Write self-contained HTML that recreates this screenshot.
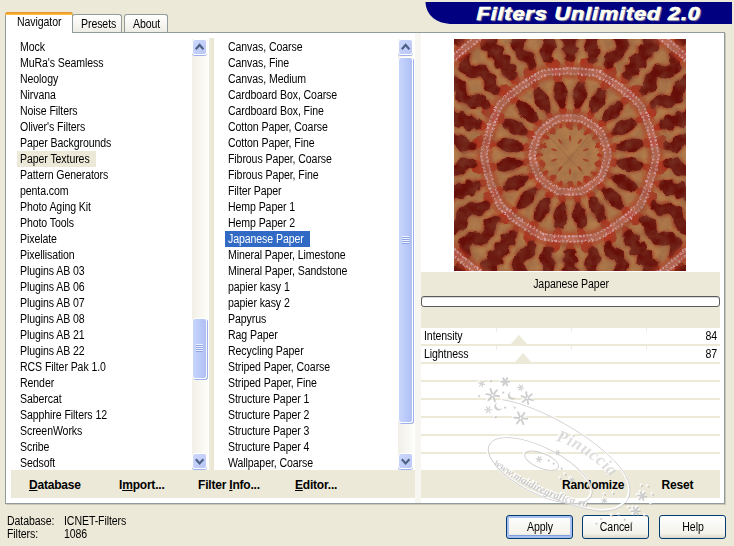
<!DOCTYPE html>
<html><head><meta charset="utf-8"><title>Filters Unlimited 2.0</title>
<style>
html,body{margin:0;padding:0}
body{width:734px;height:546px;background:#ece9d8;position:relative;overflow:hidden;font-family:"Liberation Sans",sans-serif;font-size:11px;color:#000}
div{position:absolute;box-sizing:border-box}
.x{font-size:12px;line-height:14px;white-space:nowrap;letter-spacing:-0.1px;transform:scaleX(.88)}
.sel1{background:#ece9d8}
.sel2{background:#316ac5;color:#fff}
.t{white-space:nowrap;letter-spacing:-0.32px;line-height:14px}
.b{white-space:nowrap;font-weight:bold;font-size:12px;line-height:14px;letter-spacing:-0.2px}
.b u{text-decoration:underline;text-underline-offset:1px}
.trk{width:16px;background:linear-gradient(90deg,#f1efe6,#fdfdfa)}
.sbtn{width:15px;height:16px;border:1px solid #fff;border-radius:3px;background:linear-gradient(135deg,#cdd8fc,#b9c6f6);box-shadow:0 1px 0 #9db0ee}
.sbtn svg{position:absolute;left:-1px;top:-1px}
.thumb{width:15px;border:1px solid #fff;border-radius:3px;background:linear-gradient(90deg,#c8d5fc,#b8c8f8 60%,#b0c0f4);box-shadow:1px 1px 0 #9db0ee}
.grip{width:7px;height:8px;background:repeating-linear-gradient(180deg,#eef3ff 0,#eef3ff 1px,#8ea4e6 1px,#8ea4e6 2px)}
.btn{height:24px;width:67px;border:1px solid #003c74;border-radius:3px;background:linear-gradient(180deg,#fff,#f3f2ea 80%,#dcd8c8);text-align:center;line-height:21px;letter-spacing:-0.2px;font-size:11px}
.sep{height:2px;left:421px;width:299px;background:#ece9d8}
</style></head><body>
<!-- banner -->
<svg style="position:absolute;left:0;top:0" width="734" height="32" viewBox="0 0 734 32">
<path d="M425.5,2 C426,15 436,24 453,24 L732,24 L732,2 Z" fill="#000080"/>
<g font-family="Liberation Sans, sans-serif" font-weight="bold" font-style="italic" font-size="19" transform="translate(476.5 19.6) scale(1.15 1)">
<text x="1" y="1" fill="#6a6a98" stroke="#6a6a98" stroke-width=".5" textLength="194.3" lengthAdjust="spacing">Filters Unlimited 2.0</text>
<text x="0" y="0" fill="#fffff4" stroke="#fffff4" stroke-width=".7" textLength="194.3" lengthAdjust="spacing">Filters Unlimited 2.0</text>
</g>
</svg>
<!-- tab pane -->
<div style="left:5px;top:32px;width:720px;height:472px;background:#fff;border:1px solid #919b9c;border-left-width:1px;box-shadow:1px 1px 0 #c9c7ba"></div>
<!-- tabs -->
<div style="left:72px;top:14px;width:50px;height:18px;border:1px solid #919b9c;border-bottom:none;border-radius:3px 3px 0 0;background:linear-gradient(180deg,#fff,#f4f3ee 70%,#ecebe4)"></div>
<div style="left:124px;top:14px;width:44px;height:18px;border:1px solid #919b9c;border-bottom:none;border-radius:3px 3px 0 0;background:linear-gradient(180deg,#fff,#f4f3ee 70%,#ecebe4)"></div>
<div style="left:5px;top:12px;width:68px;height:21px;border:1px solid #919b9c;border-bottom:none;border-radius:3px 3px 0 0;background:#fff"></div>
<div style="left:5px;top:12px;width:68px;height:3px;border-radius:3px 3px 0 0;background:linear-gradient(180deg,#e68b2c,#ffc73c)"></div>
<div class="x " style="top:15px;left:17px;transform-origin:0 50%;">Navigator</div>
<div class="x " style="top:17px;left:81px;transform-origin:0 50%;">Presets</div>
<div class="x " style="top:17px;left:133px;transform-origin:0 50%;">About</div>

<!-- lists -->
<div class="x " style="top:40px;left:19.6px;transform-origin:0 50%;">Mock</div>
<div class="x " style="top:56px;left:19.6px;transform-origin:0 50%;">MuRa's Seamless</div>
<div class="x " style="top:72px;left:19.6px;transform-origin:0 50%;">Neology</div>
<div class="x " style="top:88px;left:19.6px;transform-origin:0 50%;">Nirvana</div>
<div class="x " style="top:104px;left:19.6px;transform-origin:0 50%;">Noise Filters</div>
<div class="x " style="top:120px;left:19.6px;transform-origin:0 50%;">Oliver's Filters</div>
<div class="x " style="top:136px;left:19.6px;transform-origin:0 50%;">Paper Backgrounds</div>
<div class="sel1" style="left:17px;top:151px;width:79px;height:16px"></div>
<div class="x " style="top:152px;left:19.6px;transform-origin:0 50%;">Paper Textures</div>
<div class="x " style="top:168px;left:19.6px;transform-origin:0 50%;">Pattern Generators</div>
<div class="x " style="top:184px;left:19.6px;transform-origin:0 50%;">penta.com</div>
<div class="x " style="top:200px;left:19.6px;transform-origin:0 50%;">Photo Aging Kit</div>
<div class="x " style="top:216px;left:19.6px;transform-origin:0 50%;">Photo Tools</div>
<div class="x " style="top:232px;left:19.6px;transform-origin:0 50%;">Pixelate</div>
<div class="x " style="top:248px;left:19.6px;transform-origin:0 50%;">Pixellisation</div>
<div class="x " style="top:264px;left:19.6px;transform-origin:0 50%;">Plugins AB 03</div>
<div class="x " style="top:280px;left:19.6px;transform-origin:0 50%;">Plugins AB 06</div>
<div class="x " style="top:296px;left:19.6px;transform-origin:0 50%;">Plugins AB 07</div>
<div class="x " style="top:312px;left:19.6px;transform-origin:0 50%;">Plugins AB 08</div>
<div class="x " style="top:328px;left:19.6px;transform-origin:0 50%;">Plugins AB 21</div>
<div class="x " style="top:344px;left:19.6px;transform-origin:0 50%;">Plugins AB 22</div>
<div class="x " style="top:360px;left:19.6px;transform-origin:0 50%;">RCS Filter Pak 1.0</div>
<div class="x " style="top:376px;left:19.6px;transform-origin:0 50%;">Render</div>
<div class="x " style="top:392px;left:19.6px;transform-origin:0 50%;">Sabercat</div>
<div class="x " style="top:408px;left:19.6px;transform-origin:0 50%;">Sapphire Filters 12</div>
<div class="x " style="top:424px;left:19.6px;transform-origin:0 50%;">ScreenWorks</div>
<div class="x " style="top:440px;left:19.6px;transform-origin:0 50%;">Scribe</div>
<div class="x " style="top:456px;left:19.6px;transform-origin:0 50%;">Sedsoft</div>
<div class="x " style="top:40px;left:227.6px;transform-origin:0 50%;">Canvas, Coarse</div>
<div class="x " style="top:56px;left:227.6px;transform-origin:0 50%;">Canvas, Fine</div>
<div class="x " style="top:72px;left:227.6px;transform-origin:0 50%;">Canvas, Medium</div>
<div class="x " style="top:88px;left:227.6px;transform-origin:0 50%;">Cardboard Box, Coarse</div>
<div class="x " style="top:104px;left:227.6px;transform-origin:0 50%;">Cardboard Box, Fine</div>
<div class="x " style="top:120px;left:227.6px;transform-origin:0 50%;">Cotton Paper, Coarse</div>
<div class="x " style="top:136px;left:227.6px;transform-origin:0 50%;">Cotton Paper, Fine</div>
<div class="x " style="top:152px;left:227.6px;transform-origin:0 50%;">Fibrous Paper, Coarse</div>
<div class="x " style="top:168px;left:227.6px;transform-origin:0 50%;">Fibrous Paper, Fine</div>
<div class="x " style="top:184px;left:227.6px;transform-origin:0 50%;">Filter Paper</div>
<div class="x " style="top:200px;left:227.6px;transform-origin:0 50%;">Hemp Paper 1</div>
<div class="x " style="top:216px;left:227.6px;transform-origin:0 50%;">Hemp Paper 2</div>
<div class="sel2" style="left:225px;top:231px;width:85px;height:16px"></div>
<div class="x " style="top:232px;left:227.6px;transform-origin:0 50%;color:#fff;">Japanese Paper</div>
<div class="x " style="top:248px;left:227.6px;transform-origin:0 50%;">Mineral Paper, Limestone</div>
<div class="x " style="top:264px;left:227.6px;transform-origin:0 50%;">Mineral Paper, Sandstone</div>
<div class="x " style="top:280px;left:227.6px;transform-origin:0 50%;">papier kasy 1</div>
<div class="x " style="top:296px;left:227.6px;transform-origin:0 50%;">papier kasy 2</div>
<div class="x " style="top:312px;left:227.6px;transform-origin:0 50%;">Papyrus</div>
<div class="x " style="top:328px;left:227.6px;transform-origin:0 50%;">Rag Paper</div>
<div class="x " style="top:344px;left:227.6px;transform-origin:0 50%;">Recycling Paper</div>
<div class="x " style="top:360px;left:227.6px;transform-origin:0 50%;">Striped Paper, Coarse</div>
<div class="x " style="top:376px;left:227.6px;transform-origin:0 50%;">Striped Paper, Fine</div>
<div class="x " style="top:392px;left:227.6px;transform-origin:0 50%;">Structure Paper 1</div>
<div class="x " style="top:408px;left:227.6px;transform-origin:0 50%;">Structure Paper 2</div>
<div class="x " style="top:424px;left:227.6px;transform-origin:0 50%;">Structure Paper 3</div>
<div class="x " style="top:440px;left:227.6px;transform-origin:0 50%;">Structure Paper 4</div>
<div class="x " style="top:456px;left:227.6px;transform-origin:0 50%;">Wallpaper, Coarse</div>
<div class="trk" style="left:192px;top:39px;height:431px"></div><div class="sbtn" style="left:192px;top:39px"><svg width="16" height="17" viewBox="0 0 16 17"><path d="M3.8 10.2 L7.6 6 L11.4 10.2" fill="none" stroke="#4d6185" stroke-width="2.2"/></svg></div><div class="sbtn" style="left:192px;top:453px"><svg width="16" height="17" viewBox="0 0 16 17"><path d="M3.8 6.2 L7.6 10.4 L11.4 6.2" fill="none" stroke="#4d6185" stroke-width="2.2"/></svg></div><div class="thumb" style="left:192px;top:318px;height:61px"></div><div class="grip" style="left:196px;top:344px"></div>
<div class="trk" style="left:398px;top:39px;height:431px"></div><div class="sbtn" style="left:398px;top:39px"><svg width="16" height="17" viewBox="0 0 16 17"><path d="M3.8 10.2 L7.6 6 L11.4 10.2" fill="none" stroke="#4d6185" stroke-width="2.2"/></svg></div><div class="sbtn" style="left:398px;top:453px"><svg width="16" height="17" viewBox="0 0 16 17"><path d="M3.8 6.2 L7.6 10.4 L11.4 6.2" fill="none" stroke="#4d6185" stroke-width="2.2"/></svg></div><div class="thumb" style="left:398px;top:57px;height:366px"></div><div class="grip" style="left:402px;top:236px"></div>
<div style="left:209px;top:38px;width:5px;height:432px;background:linear-gradient(90deg,#efecdd,#e9e5d2)"></div>
<div style="left:415px;top:33px;width:6px;height:470px;background:#f7f6f1"></div>

<!-- bottom bars -->
<div style="left:11px;top:470px;width:404px;height:28px;background:#ece9d8"></div>
<div style="left:421px;top:470px;width:299px;height:28px;background:#ece9d8"></div>

<div class="b" style="left:29px;top:478px"><u>D</u>atabase</div>
<div class="b" style="left:119px;top:478px">I<u>m</u>port...</div>
<div class="b" style="left:198px;top:478px">Filter <u>I</u>nfo...</div>
<div class="b" style="left:295px;top:478px"><u>E</u>ditor...</div>
<div class="b" style="left:562px;top:478px">Randomize</div>
<div class="b" style="left:661.6px;top:478px">Reset</div>

<!-- preview -->
<svg style="position:absolute;left:454px;top:39px" width="232" height="232" viewBox="-116 -116 232 232">
<defs>
<filter id="kb0" x="-20%" y="-20%" width="140%" height="140%"><feGaussianBlur stdDeviation="0.35"/></filter>
<filter id="kb1" x="-20%" y="-20%" width="140%" height="140%"><feGaussianBlur stdDeviation="0.7"/></filter>
<filter id="kb2" x="-20%" y="-20%" width="140%" height="140%"><feGaussianBlur stdDeviation="1.6"/></filter>
<filter id="ktex" x="0" y="0" width="100%" height="100%"><feTurbulence type="fractalNoise" baseFrequency="0.09" numOctaves="3" seed="4"/><feColorMatrix values="0 0 0 0 0.25  0 0 0 0 0.1  0 0 0 0 0.05  0.9 0.9 0 0 -0.62"/></filter>
<filter id="kwarp2" x="-5%" y="-5%" width="110%" height="110%"><feTurbulence type="fractalNoise" baseFrequency="0.35" numOctaves="2" seed="5" result="n"/><feDisplacementMap in="SourceGraphic" in2="n" scale="3.2" xChannelSelector="R" yChannelSelector="G"/></filter>
<filter id="kwarp" x="-5%" y="-5%" width="110%" height="110%"><feTurbulence type="fractalNoise" baseFrequency="0.11" numOctaves="2" seed="9" result="n"/><feDisplacementMap in="SourceGraphic" in2="n" scale="5" xChannelSelector="R" yChannelSelector="G"/><feGaussianBlur stdDeviation="0.6"/></filter>
<path id="ksec" d="M-2.8,-94.0 L-5.8,-96.8 L-4.6,-99.9 L-7.4,-102.7 L-8.4,-105.7 L-5.5,-108.9 L-5.6,-111.9 L-8.8,-114.7 L-8.1,-117.7 L-5.2,-120.9 L-7.1,-123.8 L-9.8,-126.6 L-7.3,-129.8 L-5.5,-132.9 L-8.8,-135.7 L-10.0,-138.6 L-6.5,-141.9 L-3.6,-145.0 L3.6,-145.0 L6.5,-141.9 L10.0,-138.6 L8.8,-135.7 L5.5,-132.9 L7.3,-129.8 L9.8,-126.6 L7.1,-123.8 L5.2,-120.9 L8.1,-117.7 L8.8,-114.7 L5.6,-111.9 L5.5,-108.9 L8.4,-105.7 L7.4,-102.7 L4.6,-99.9 L5.8,-96.8 L2.8,-94.0Z M18.1,-92.2 L17.2,-95.5 L18.7,-98.2 L18.0,-101.4 L15.7,-104.8 L14.2,-108.1 L14.5,-111.1 L15.8,-113.9 L16.2,-116.9 L15.6,-120.0 L16.0,-123.0 L19.0,-125.6 L23.8,-127.8 L27.4,-130.1 L27.3,-133.2 L23.8,-136.9 L19.8,-140.6 L22.1,-143.3 L32.1,-141.4 L39.7,-136.3 L40.3,-133.0 L39.0,-130.3 L37.7,-127.5 L37.3,-124.5 L36.4,-121.7 L33.5,-119.4 L29.2,-117.4 L25.9,-115.1 L25.8,-112.1 L28.1,-108.4 L30.3,-104.7 L30.3,-101.6 L28.6,-99.0 L26.9,-96.3 L26.4,-93.3 L22.6,-91.2Z M-22.6,-91.2 L-26.4,-93.3 L-26.9,-96.3 L-28.6,-99.0 L-30.3,-101.6 L-30.3,-104.7 L-28.1,-108.4 L-25.8,-112.1 L-25.9,-115.1 L-29.2,-117.4 L-33.5,-119.4 L-36.4,-121.7 L-37.3,-124.5 L-37.7,-127.5 L-39.0,-130.3 L-40.3,-133.0 L-39.7,-136.3 L-32.1,-141.4 L-22.1,-143.3 L-19.8,-140.6 L-23.8,-136.9 L-27.3,-133.2 L-27.4,-130.1 L-23.8,-127.8 L-19.0,-125.6 L-16.0,-123.0 L-15.6,-120.0 L-16.2,-116.9 L-15.8,-113.9 L-14.5,-111.1 L-14.2,-108.1 L-15.7,-104.8 L-18.0,-101.4 L-18.7,-98.2 L-17.2,-95.5 L-18.1,-92.2Z M-2.5,-154.0 L-6.4,-156.9 L-6.1,-159.9 L-6.2,-162.9 L-7.0,-165.9 L-7.5,-168.8 L-6.8,-171.9 L-2.3,-175.0 L2.3,-175.0 L6.8,-171.9 L7.5,-168.8 L7.0,-165.9 L6.2,-162.9 L6.1,-159.9 L6.4,-156.9 L2.5,-154.0Z M19.0,-152.8 L15.5,-156.2 L16.2,-159.2 L16.6,-162.2 L16.2,-165.2 L16.0,-168.2 L17.2,-171.1 L22.1,-173.6 L26.6,-173.0 L30.6,-169.2 L31.0,-166.1 L30.0,-163.3 L28.8,-160.4 L28.3,-157.5 L28.2,-154.4 L23.9,-152.1Z M-23.9,-152.1 L-28.2,-154.4 L-28.3,-157.5 L-28.8,-160.4 L-30.0,-163.3 L-31.0,-166.1 L-30.6,-169.2 L-26.6,-173.0 L-22.1,-173.6 L-17.2,-171.1 L-16.0,-168.2 L-16.2,-165.2 L-16.6,-162.2 L-16.2,-159.2 L-15.5,-156.2 L-19.0,-152.8Z M40.0,-148.7 L37.1,-152.6 L38.2,-155.4 L39.0,-158.3 L39.0,-161.4 L39.3,-164.4 L40.9,-167.1 L46.1,-168.8 L50.4,-167.6 L53.9,-163.3 L53.8,-160.2 L52.4,-157.5 L50.8,-154.9 L49.9,-152.0 L49.4,-149.0 L44.8,-147.3Z M-44.8,-147.3 L-49.4,-149.0 L-49.9,-152.0 L-50.8,-154.9 L-52.4,-157.5 L-53.8,-160.2 L-53.9,-163.3 L-50.4,-167.6 L-46.1,-168.8 L-40.9,-167.1 L-39.3,-164.4 L-39.0,-161.4 L-39.0,-158.3 L-38.2,-155.4 L-37.1,-152.6 L-40.0,-148.7Z M6.2,-46.6 L4.3,-49.8 L3.7,-52.9 L3.1,-55.9 L2.7,-58.9 L2.9,-61.9 L3.8,-64.9 L5.2,-67.8 L6.6,-70.7 L8.6,-73.5 L14.5,-72.6 L15.6,-69.3 L16.0,-66.1 L16.4,-62.9 L16.4,-59.8 L15.6,-56.9 L14.4,-54.1 L12.8,-51.4 L11.3,-48.7 L8.5,-46.2Z M-8.5,-46.2 L-11.3,-48.7 L-12.8,-51.4 L-14.4,-54.1 L-15.6,-56.9 L-16.4,-59.8 L-16.4,-62.9 L-16.0,-66.1 L-15.6,-69.3 L-14.5,-72.6 L-8.6,-73.5 L-6.6,-70.7 L-5.2,-67.8 L-3.8,-64.9 L-2.9,-61.9 L-2.7,-58.9 L-3.1,-55.9 L-3.7,-52.9 L-4.3,-49.8 L-6.2,-46.6Z"/>
<path id="kacc" d="M5.0,-39.7 L3.1,-42.9 L3.1,-45.9 L5.3,-48.7 L10.0,-48.0 L11.2,-44.6 L10.3,-41.8 L7.5,-39.3Z M10.0,-73.3 L7.8,-76.6 L8.1,-79.6 L8.5,-82.6 L9.0,-85.5 L9.5,-88.5 L9.9,-91.5 L10.6,-94.4 L13.8,-97.0 L16.9,-96.5 L19.1,-93.1 L18.8,-90.1 L18.3,-87.1 L17.9,-84.1 L17.4,-81.2 L16.9,-78.2 L16.2,-75.3 L13.1,-72.8Z M-7.5,-39.3 L-10.3,-41.8 L-11.2,-44.6 L-10.0,-48.0 L-5.3,-48.7 L-3.1,-45.9 L-3.1,-42.9 L-5.0,-39.7Z M-13.1,-72.8 L-16.2,-75.3 L-16.9,-78.2 L-17.4,-81.2 L-17.9,-84.1 L-18.3,-87.1 L-18.8,-90.1 L-19.1,-93.1 L-16.9,-96.5 L-13.8,-97.0 L-10.6,-94.4 L-9.9,-91.5 L-9.5,-88.5 L-9.0,-85.5 L-8.5,-82.6 L-8.1,-79.6 L-7.8,-76.6 L-10.0,-73.3Z M-1.4,-88.0 L-4.0,-90.9 L-4.5,-93.9 L-4.5,-96.9 L-1.7,-100.0 L1.7,-100.0 L4.5,-96.9 L4.5,-93.9 L4.0,-90.9 L1.4,-88.0Z M-1.7,-141.0 L-4.7,-143.9 L-5.0,-146.9 L-5.0,-149.9 L-5.0,-152.9 L-3.7,-156.0 L3.7,-156.0 L5.0,-152.9 L5.0,-149.9 L5.0,-146.9 L4.7,-143.9 L1.7,-141.0Z M16.9,-86.4 L15.0,-89.8 L15.1,-92.8 L15.7,-95.7 L19.1,-98.2 L22.5,-97.4 L24.6,-93.8 L23.9,-90.9 L22.8,-88.1 L19.7,-85.8Z M27.6,-138.3 L25.3,-141.8 L25.7,-144.7 L26.3,-147.7 L26.9,-150.6 L28.8,-153.3 L36.1,-151.8 L36.7,-148.5 L36.1,-145.6 L35.4,-142.7 L34.6,-139.8 L31.0,-137.5Z M-19.7,-85.8 L-22.8,-88.1 L-23.9,-90.9 L-24.6,-93.8 L-22.5,-97.4 L-19.1,-98.2 L-15.7,-95.7 L-15.1,-92.8 L-15.0,-89.8 L-16.9,-86.4Z M-31.0,-137.5 L-34.6,-139.8 L-35.4,-142.7 L-36.1,-145.6 L-36.7,-148.5 L-36.1,-151.8 L-28.8,-153.3 L-26.9,-150.6 L-26.3,-147.7 L-25.7,-144.7 L-25.3,-141.8 L-27.6,-138.3Z M-1.0,-26.0 L-3.2,-28.8 L-2.8,-31.9 L2.8,-31.9 L3.2,-28.8 L1.0,-26.0Z M7.7,-25.9 L7.1,-29.2 L8.7,-31.8 L11.7,-30.9 L11.4,-27.7 L9.0,-25.5Z"/>
<path id="kmark" d="M-0.4,-13.5 L-1.2,-16.5 L-0.8,-19.5 L0.8,-19.5 L1.2,-16.5 L0.4,-13.5Z"/>
</defs>
<rect x="-116" y="-116" width="232" height="232" fill="#b27d4c"/>
<g fill="#a82a18" fill-opacity=".85" filter="url(#kwarp)"><use href="#kacc" transform="rotate(0)"/><use href="#kacc" transform="rotate(36)"/><use href="#kacc" transform="rotate(72)"/><use href="#kacc" transform="rotate(108)"/><use href="#kacc" transform="rotate(144)"/><use href="#kacc" transform="rotate(180)"/><use href="#kacc" transform="rotate(216)"/><use href="#kacc" transform="rotate(252)"/><use href="#kacc" transform="rotate(288)"/><use href="#kacc" transform="rotate(324)"/></g>
<g fill="#b5331f" stroke="#b5331f" stroke-width="3.5" opacity=".45" filter="url(#kb2)"><use href="#ksec" transform="rotate(0)"/><use href="#ksec" transform="rotate(36)"/><use href="#ksec" transform="rotate(72)"/><use href="#ksec" transform="rotate(108)"/><use href="#ksec" transform="rotate(144)"/><use href="#ksec" transform="rotate(180)"/><use href="#ksec" transform="rotate(216)"/><use href="#ksec" transform="rotate(252)"/><use href="#ksec" transform="rotate(288)"/><use href="#ksec" transform="rotate(324)"/></g>
<g fill="#6c1210" filter="url(#kwarp)"><use href="#ksec" transform="rotate(0)"/><use href="#ksec" transform="rotate(36)"/><use href="#ksec" transform="rotate(72)"/><use href="#ksec" transform="rotate(108)"/><use href="#ksec" transform="rotate(144)"/><use href="#ksec" transform="rotate(180)"/><use href="#ksec" transform="rotate(216)"/><use href="#ksec" transform="rotate(252)"/><use href="#ksec" transform="rotate(288)"/><use href="#ksec" transform="rotate(324)"/></g>
<g fill="#5c0d0c" fill-opacity=".35" filter="url(#kb2)"><use href="#ksec" transform="rotate(0)"/><use href="#ksec" transform="rotate(36)"/><use href="#ksec" transform="rotate(72)"/><use href="#ksec" transform="rotate(108)"/><use href="#ksec" transform="rotate(144)"/><use href="#ksec" transform="rotate(180)"/><use href="#ksec" transform="rotate(216)"/><use href="#ksec" transform="rotate(252)"/><use href="#ksec" transform="rotate(288)"/><use href="#ksec" transform="rotate(324)"/></g>
<g filter="url(#kwarp2)"><path d="M0.0,-37.0 L1.9,-37.0 L3.9,-36.9 L5.8,-36.8 L7.8,-36.6 L9.7,-36.4 L11.7,-36.1 L13.5,-35.2 L15.2,-34.2 L16.9,-33.2 L18.6,-32.1 L20.2,-31.1 L21.7,-29.9 L23.3,-28.8 L24.8,-27.6 L26.3,-26.3 L27.8,-25.0 L29.3,-23.7 L30.7,-22.3 L31.6,-20.5 L32.4,-18.7 L33.2,-16.9 L33.9,-15.1 L34.6,-13.3 L35.2,-11.4 L35.8,-9.6 L36.3,-7.7 L36.8,-5.8 L37.2,-3.9 L37.6,-2.0 L38.0,-0.0 L37.6,2.0 L37.2,3.9 L36.8,5.8 L36.3,7.7 L35.8,9.6 L35.2,11.4 L34.6,13.3 L33.9,15.1 L33.2,16.9 L32.4,18.7 L31.6,20.5 L30.7,22.3 L29.3,23.7 L27.8,25.0 L26.3,26.3 L24.8,27.6 L23.3,28.8 L21.7,29.9 L20.2,31.1 L18.6,32.1 L16.9,33.2 L15.2,34.2 L13.5,35.2 L11.7,36.1 L9.7,36.4 L7.8,36.6 L5.8,36.8 L3.9,36.9 L1.9,37.0 L0.0,37.0 L-1.9,37.0 L-3.9,36.9 L-5.8,36.8 L-7.8,36.6 L-9.7,36.4 L-11.7,36.1 L-13.5,35.2 L-15.2,34.2 L-16.9,33.2 L-18.6,32.1 L-20.2,31.1 L-21.7,29.9 L-23.3,28.8 L-24.8,27.6 L-26.3,26.3 L-27.8,25.0 L-29.3,23.7 L-30.7,22.3 L-31.6,20.5 L-32.4,18.7 L-33.2,16.9 L-33.9,15.1 L-34.6,13.3 L-35.2,11.4 L-35.8,9.6 L-36.3,7.7 L-36.8,5.8 L-37.2,3.9 L-37.6,2.0 L-38.0,0.0 L-37.6,-2.0 L-37.2,-3.9 L-36.8,-5.8 L-36.3,-7.7 L-35.8,-9.6 L-35.2,-11.4 L-34.6,-13.3 L-33.9,-15.1 L-33.2,-16.9 L-32.4,-18.7 L-31.6,-20.5 L-30.7,-22.3 L-29.3,-23.7 L-27.8,-25.0 L-26.3,-26.3 L-24.8,-27.6 L-23.3,-28.8 L-21.7,-29.9 L-20.2,-31.1 L-18.6,-32.1 L-16.9,-33.2 L-15.2,-34.2 L-13.5,-35.2 L-11.7,-36.1 L-9.7,-36.4 L-7.8,-36.6 L-5.8,-36.8 L-3.9,-36.9 L-1.9,-37.0Z" fill="none" stroke="#b23621" stroke-width="16" stroke-opacity=".6" filter="url(#kb2)"/><path d="M0.0,-37.0 L1.9,-37.0 L3.9,-36.9 L5.8,-36.8 L7.8,-36.6 L9.7,-36.4 L11.7,-36.1 L13.5,-35.2 L15.2,-34.2 L16.9,-33.2 L18.6,-32.1 L20.2,-31.1 L21.7,-29.9 L23.3,-28.8 L24.8,-27.6 L26.3,-26.3 L27.8,-25.0 L29.3,-23.7 L30.7,-22.3 L31.6,-20.5 L32.4,-18.7 L33.2,-16.9 L33.9,-15.1 L34.6,-13.3 L35.2,-11.4 L35.8,-9.6 L36.3,-7.7 L36.8,-5.8 L37.2,-3.9 L37.6,-2.0 L38.0,-0.0 L37.6,2.0 L37.2,3.9 L36.8,5.8 L36.3,7.7 L35.8,9.6 L35.2,11.4 L34.6,13.3 L33.9,15.1 L33.2,16.9 L32.4,18.7 L31.6,20.5 L30.7,22.3 L29.3,23.7 L27.8,25.0 L26.3,26.3 L24.8,27.6 L23.3,28.8 L21.7,29.9 L20.2,31.1 L18.6,32.1 L16.9,33.2 L15.2,34.2 L13.5,35.2 L11.7,36.1 L9.7,36.4 L7.8,36.6 L5.8,36.8 L3.9,36.9 L1.9,37.0 L0.0,37.0 L-1.9,37.0 L-3.9,36.9 L-5.8,36.8 L-7.8,36.6 L-9.7,36.4 L-11.7,36.1 L-13.5,35.2 L-15.2,34.2 L-16.9,33.2 L-18.6,32.1 L-20.2,31.1 L-21.7,29.9 L-23.3,28.8 L-24.8,27.6 L-26.3,26.3 L-27.8,25.0 L-29.3,23.7 L-30.7,22.3 L-31.6,20.5 L-32.4,18.7 L-33.2,16.9 L-33.9,15.1 L-34.6,13.3 L-35.2,11.4 L-35.8,9.6 L-36.3,7.7 L-36.8,5.8 L-37.2,3.9 L-37.6,2.0 L-38.0,0.0 L-37.6,-2.0 L-37.2,-3.9 L-36.8,-5.8 L-36.3,-7.7 L-35.8,-9.6 L-35.2,-11.4 L-34.6,-13.3 L-33.9,-15.1 L-33.2,-16.9 L-32.4,-18.7 L-31.6,-20.5 L-30.7,-22.3 L-29.3,-23.7 L-27.8,-25.0 L-26.3,-26.3 L-24.8,-27.6 L-23.3,-28.8 L-21.7,-29.9 L-20.2,-31.1 L-18.6,-32.1 L-16.9,-33.2 L-15.2,-34.2 L-13.5,-35.2 L-11.7,-36.1 L-9.7,-36.4 L-7.8,-36.6 L-5.8,-36.8 L-3.9,-36.9 L-1.9,-37.0Z" fill="none" stroke="#cf9294" stroke-width="7.5" stroke-opacity=".35" filter="url(#kb1)"/><path d="M0.0,-39.6 L2.1,-39.6 L4.2,-39.5 L6.2,-39.4 L8.3,-39.2 L10.4,-38.9 L12.6,-38.6 L14.4,-37.6 L16.3,-36.6 L18.1,-35.5 L19.9,-34.4 L21.6,-33.2 L23.3,-32.0 L24.9,-30.8 L26.6,-29.5 L28.2,-28.2 L29.8,-26.8 L31.3,-25.4 L32.9,-23.9 L33.8,-21.9 L34.7,-20.0 L35.5,-18.1 L36.3,-16.2 L37.0,-14.2 L37.7,-12.2 L38.3,-10.3 L38.8,-8.3 L39.4,-6.2 L39.8,-4.2 L40.2,-2.1 L40.6,-0.0 L40.2,2.1 L39.8,4.2 L39.4,6.2 L38.8,8.3 L38.3,10.3 L37.7,12.2 L37.0,14.2 L36.3,16.2 L35.5,18.1 L34.7,20.0 L33.8,21.9 L32.9,23.9 L31.3,25.4 L29.8,26.8 L28.2,28.2 L26.6,29.5 L24.9,30.8 L23.3,32.0 L21.6,33.2 L19.9,34.4 L18.1,35.5 L16.3,36.6 L14.4,37.6 L12.6,38.6 L10.4,38.9 L8.3,39.2 L6.2,39.4 L4.2,39.5 L2.1,39.6 L0.0,39.6 L-2.1,39.6 L-4.2,39.5 L-6.2,39.4 L-8.3,39.2 L-10.4,38.9 L-12.6,38.6 L-14.4,37.6 L-16.3,36.6 L-18.1,35.5 L-19.9,34.4 L-21.6,33.2 L-23.3,32.0 L-24.9,30.8 L-26.6,29.5 L-28.2,28.2 L-29.8,26.8 L-31.3,25.4 L-32.9,23.9 L-33.8,21.9 L-34.7,20.0 L-35.5,18.1 L-36.3,16.2 L-37.0,14.2 L-37.7,12.2 L-38.3,10.3 L-38.8,8.3 L-39.4,6.2 L-39.8,4.2 L-40.2,2.1 L-40.6,0.0 L-40.2,-2.1 L-39.8,-4.2 L-39.4,-6.2 L-38.8,-8.3 L-38.3,-10.3 L-37.7,-12.2 L-37.0,-14.2 L-36.3,-16.2 L-35.5,-18.1 L-34.7,-20.0 L-33.8,-21.9 L-32.9,-23.9 L-31.3,-25.4 L-29.8,-26.8 L-28.2,-28.2 L-26.6,-29.5 L-24.9,-30.8 L-23.3,-32.0 L-21.6,-33.2 L-19.9,-34.4 L-18.1,-35.5 L-16.3,-36.6 L-14.4,-37.6 L-12.6,-38.6 L-10.4,-38.9 L-8.3,-39.2 L-6.2,-39.4 L-4.2,-39.5 L-2.1,-39.6Z" fill="none" stroke="#d9a7ab" stroke-width="2.2" stroke-dasharray="2 1.7" stroke-opacity=".92" filter="url(#kb0)"/><path d="M0.0,-34.4 L1.8,-34.4 L3.6,-34.3 L5.4,-34.2 L7.2,-34.0 L9.1,-33.8 L10.9,-33.6 L12.5,-32.7 L14.1,-31.8 L15.7,-30.8 L17.2,-29.9 L18.7,-28.9 L20.2,-27.8 L21.7,-26.8 L23.1,-25.6 L24.5,-24.5 L25.8,-23.3 L27.2,-22.0 L28.5,-20.7 L29.4,-19.1 L30.1,-17.4 L30.8,-15.7 L31.5,-14.0 L32.1,-12.3 L32.7,-10.6 L33.3,-8.9 L33.7,-7.2 L34.2,-5.4 L34.6,-3.6 L35.0,-1.8 L35.3,-0.0 L35.0,1.8 L34.6,3.6 L34.2,5.4 L33.7,7.2 L33.3,8.9 L32.7,10.6 L32.1,12.3 L31.5,14.0 L30.8,15.7 L30.1,17.4 L29.4,19.1 L28.5,20.7 L27.2,22.0 L25.8,23.3 L24.5,24.5 L23.1,25.6 L21.7,26.8 L20.2,27.8 L18.7,28.9 L17.2,29.9 L15.7,30.8 L14.1,31.8 L12.5,32.7 L10.9,33.6 L9.1,33.8 L7.2,34.0 L5.4,34.2 L3.6,34.3 L1.8,34.4 L0.0,34.4 L-1.8,34.4 L-3.6,34.3 L-5.4,34.2 L-7.2,34.0 L-9.1,33.8 L-10.9,33.6 L-12.5,32.7 L-14.1,31.8 L-15.7,30.8 L-17.2,29.9 L-18.7,28.9 L-20.2,27.8 L-21.7,26.8 L-23.1,25.6 L-24.5,24.5 L-25.8,23.3 L-27.2,22.0 L-28.5,20.7 L-29.4,19.1 L-30.1,17.4 L-30.8,15.7 L-31.5,14.0 L-32.1,12.3 L-32.7,10.6 L-33.3,8.9 L-33.7,7.2 L-34.2,5.4 L-34.6,3.6 L-35.0,1.8 L-35.3,0.0 L-35.0,-1.8 L-34.6,-3.6 L-34.2,-5.4 L-33.7,-7.2 L-33.3,-8.9 L-32.7,-10.6 L-32.1,-12.3 L-31.5,-14.0 L-30.8,-15.7 L-30.1,-17.4 L-29.4,-19.1 L-28.5,-20.7 L-27.2,-22.0 L-25.8,-23.3 L-24.5,-24.5 L-23.1,-25.6 L-21.7,-26.8 L-20.2,-27.8 L-18.7,-28.9 L-17.2,-29.9 L-15.7,-30.8 L-14.1,-31.8 L-12.5,-32.7 L-10.9,-33.6 L-9.1,-33.8 L-7.2,-34.0 L-5.4,-34.2 L-3.6,-34.3 L-1.8,-34.4Z" fill="none" stroke="#d9a7ab" stroke-width="2.2" stroke-dasharray="2 1.7" stroke-opacity=".92" filter="url(#kb0)"/><path d="M0.0,-84.0 L4.4,-83.9 L8.8,-83.8 L13.2,-83.5 L17.7,-83.1 L22.1,-82.6 L26.6,-81.9 L30.6,-79.8 L34.5,-77.6 L38.4,-75.3 L42.1,-72.9 L45.8,-70.5 L49.4,-68.0 L52.9,-65.3 L56.4,-62.6 L59.8,-59.8 L63.1,-56.8 L66.4,-53.8 L69.7,-50.6 L71.7,-46.6 L73.6,-42.5 L75.3,-38.4 L76.9,-34.3 L78.5,-30.1 L79.9,-26.0 L81.2,-21.8 L82.4,-17.5 L83.5,-13.2 L84.5,-8.9 L85.4,-4.5 L86.2,-0.0 L85.4,4.5 L84.5,8.9 L83.5,13.2 L82.4,17.5 L81.2,21.8 L79.9,26.0 L78.5,30.1 L76.9,34.3 L75.3,38.4 L73.6,42.5 L71.7,46.6 L69.7,50.6 L66.4,53.8 L63.1,56.8 L59.8,59.8 L56.4,62.6 L52.9,65.3 L49.4,68.0 L45.8,70.5 L42.1,72.9 L38.4,75.3 L34.5,77.6 L30.6,79.8 L26.6,81.9 L22.1,82.6 L17.7,83.1 L13.2,83.5 L8.8,83.8 L4.4,83.9 L0.0,84.0 L-4.4,83.9 L-8.8,83.8 L-13.2,83.5 L-17.7,83.1 L-22.1,82.6 L-26.6,81.9 L-30.6,79.8 L-34.5,77.6 L-38.4,75.3 L-42.1,72.9 L-45.8,70.5 L-49.4,68.0 L-52.9,65.3 L-56.4,62.6 L-59.8,59.8 L-63.1,56.8 L-66.4,53.8 L-69.7,50.6 L-71.7,46.6 L-73.6,42.5 L-75.3,38.4 L-76.9,34.3 L-78.5,30.1 L-79.9,26.0 L-81.2,21.8 L-82.4,17.5 L-83.5,13.2 L-84.5,8.9 L-85.4,4.5 L-86.2,0.0 L-85.4,-4.5 L-84.5,-8.9 L-83.5,-13.2 L-82.4,-17.5 L-81.2,-21.8 L-79.9,-26.0 L-78.5,-30.1 L-76.9,-34.3 L-75.3,-38.4 L-73.6,-42.5 L-71.7,-46.6 L-69.7,-50.6 L-66.4,-53.8 L-63.1,-56.8 L-59.8,-59.8 L-56.4,-62.6 L-52.9,-65.3 L-49.4,-68.0 L-45.8,-70.5 L-42.1,-72.9 L-38.4,-75.3 L-34.5,-77.6 L-30.6,-79.8 L-26.6,-81.9 L-22.1,-82.6 L-17.7,-83.1 L-13.2,-83.5 L-8.8,-83.8 L-4.4,-83.9Z" fill="none" stroke="#b23621" stroke-width="16" stroke-opacity=".6" filter="url(#kb2)"/><path d="M0.0,-84.0 L4.4,-83.9 L8.8,-83.8 L13.2,-83.5 L17.7,-83.1 L22.1,-82.6 L26.6,-81.9 L30.6,-79.8 L34.5,-77.6 L38.4,-75.3 L42.1,-72.9 L45.8,-70.5 L49.4,-68.0 L52.9,-65.3 L56.4,-62.6 L59.8,-59.8 L63.1,-56.8 L66.4,-53.8 L69.7,-50.6 L71.7,-46.6 L73.6,-42.5 L75.3,-38.4 L76.9,-34.3 L78.5,-30.1 L79.9,-26.0 L81.2,-21.8 L82.4,-17.5 L83.5,-13.2 L84.5,-8.9 L85.4,-4.5 L86.2,-0.0 L85.4,4.5 L84.5,8.9 L83.5,13.2 L82.4,17.5 L81.2,21.8 L79.9,26.0 L78.5,30.1 L76.9,34.3 L75.3,38.4 L73.6,42.5 L71.7,46.6 L69.7,50.6 L66.4,53.8 L63.1,56.8 L59.8,59.8 L56.4,62.6 L52.9,65.3 L49.4,68.0 L45.8,70.5 L42.1,72.9 L38.4,75.3 L34.5,77.6 L30.6,79.8 L26.6,81.9 L22.1,82.6 L17.7,83.1 L13.2,83.5 L8.8,83.8 L4.4,83.9 L0.0,84.0 L-4.4,83.9 L-8.8,83.8 L-13.2,83.5 L-17.7,83.1 L-22.1,82.6 L-26.6,81.9 L-30.6,79.8 L-34.5,77.6 L-38.4,75.3 L-42.1,72.9 L-45.8,70.5 L-49.4,68.0 L-52.9,65.3 L-56.4,62.6 L-59.8,59.8 L-63.1,56.8 L-66.4,53.8 L-69.7,50.6 L-71.7,46.6 L-73.6,42.5 L-75.3,38.4 L-76.9,34.3 L-78.5,30.1 L-79.9,26.0 L-81.2,21.8 L-82.4,17.5 L-83.5,13.2 L-84.5,8.9 L-85.4,4.5 L-86.2,0.0 L-85.4,-4.5 L-84.5,-8.9 L-83.5,-13.2 L-82.4,-17.5 L-81.2,-21.8 L-79.9,-26.0 L-78.5,-30.1 L-76.9,-34.3 L-75.3,-38.4 L-73.6,-42.5 L-71.7,-46.6 L-69.7,-50.6 L-66.4,-53.8 L-63.1,-56.8 L-59.8,-59.8 L-56.4,-62.6 L-52.9,-65.3 L-49.4,-68.0 L-45.8,-70.5 L-42.1,-72.9 L-38.4,-75.3 L-34.5,-77.6 L-30.6,-79.8 L-26.6,-81.9 L-22.1,-82.6 L-17.7,-83.1 L-13.2,-83.5 L-8.8,-83.8 L-4.4,-83.9Z" fill="none" stroke="#cf9294" stroke-width="7.5" stroke-opacity=".35" filter="url(#kb1)"/><path d="M0.0,-86.6 L4.5,-86.5 L9.1,-86.4 L13.6,-86.1 L18.2,-85.7 L22.8,-85.1 L27.4,-84.5 L31.6,-82.3 L35.6,-80.0 L39.6,-77.6 L43.4,-75.2 L47.2,-72.7 L50.9,-70.1 L54.5,-67.3 L58.1,-64.5 L61.6,-61.6 L65.1,-58.6 L68.5,-55.5 L71.9,-52.2 L73.9,-48.0 L75.8,-43.8 L77.6,-39.6 L79.3,-35.3 L80.9,-31.1 L82.4,-26.8 L83.7,-22.4 L84.9,-18.1 L86.1,-13.6 L87.1,-9.2 L88.0,-4.6 L88.8,-0.0 L88.0,4.6 L87.1,9.2 L86.1,13.6 L84.9,18.1 L83.7,22.4 L82.4,26.8 L80.9,31.1 L79.3,35.3 L77.6,39.6 L75.8,43.8 L73.9,48.0 L71.9,52.2 L68.5,55.5 L65.1,58.6 L61.6,61.6 L58.1,64.5 L54.5,67.3 L50.9,70.1 L47.2,72.7 L43.4,75.2 L39.6,77.6 L35.6,80.0 L31.6,82.3 L27.4,84.5 L22.8,85.1 L18.2,85.7 L13.6,86.1 L9.1,86.4 L4.5,86.5 L0.0,86.6 L-4.5,86.5 L-9.1,86.4 L-13.6,86.1 L-18.2,85.7 L-22.8,85.1 L-27.4,84.5 L-31.6,82.3 L-35.6,80.0 L-39.6,77.6 L-43.4,75.2 L-47.2,72.7 L-50.9,70.1 L-54.5,67.3 L-58.1,64.5 L-61.6,61.6 L-65.1,58.6 L-68.5,55.5 L-71.9,52.2 L-73.9,48.0 L-75.8,43.8 L-77.6,39.6 L-79.3,35.3 L-80.9,31.1 L-82.4,26.8 L-83.7,22.4 L-84.9,18.1 L-86.1,13.6 L-87.1,9.2 L-88.0,4.6 L-88.8,0.0 L-88.0,-4.6 L-87.1,-9.2 L-86.1,-13.6 L-84.9,-18.1 L-83.7,-22.4 L-82.4,-26.8 L-80.9,-31.1 L-79.3,-35.3 L-77.6,-39.6 L-75.8,-43.8 L-73.9,-48.0 L-71.9,-52.2 L-68.5,-55.5 L-65.1,-58.6 L-61.6,-61.6 L-58.1,-64.5 L-54.5,-67.3 L-50.9,-70.1 L-47.2,-72.7 L-43.4,-75.2 L-39.6,-77.6 L-35.6,-80.0 L-31.6,-82.3 L-27.4,-84.5 L-22.8,-85.1 L-18.2,-85.7 L-13.6,-86.1 L-9.1,-86.4 L-4.5,-86.5Z" fill="none" stroke="#d9a7ab" stroke-width="2.2" stroke-dasharray="2 1.7" stroke-opacity=".92" filter="url(#kb0)"/><path d="M0.0,-81.4 L4.3,-81.3 L8.5,-81.2 L12.8,-80.9 L17.1,-80.5 L21.4,-80.0 L25.8,-79.4 L29.7,-77.3 L33.5,-75.2 L37.2,-73.0 L40.8,-70.7 L44.4,-68.3 L47.8,-65.9 L51.3,-63.3 L54.6,-60.7 L57.9,-57.9 L61.2,-55.1 L64.4,-52.1 L67.5,-49.1 L69.5,-45.1 L71.3,-41.2 L73.0,-37.2 L74.6,-33.2 L76.0,-29.2 L77.4,-25.2 L78.7,-21.1 L79.8,-17.0 L80.9,-12.8 L81.9,-8.6 L82.7,-4.3 L83.5,-0.0 L82.7,4.3 L81.9,8.6 L80.9,12.8 L79.8,17.0 L78.7,21.1 L77.4,25.2 L76.0,29.2 L74.6,33.2 L73.0,37.2 L71.3,41.2 L69.5,45.1 L67.5,49.1 L64.4,52.1 L61.2,55.1 L57.9,57.9 L54.6,60.7 L51.3,63.3 L47.8,65.9 L44.4,68.3 L40.8,70.7 L37.2,73.0 L33.5,75.2 L29.7,77.3 L25.8,79.4 L21.4,80.0 L17.1,80.5 L12.8,80.9 L8.5,81.2 L4.3,81.3 L0.0,81.4 L-4.3,81.3 L-8.5,81.2 L-12.8,80.9 L-17.1,80.5 L-21.4,80.0 L-25.8,79.4 L-29.7,77.3 L-33.5,75.2 L-37.2,73.0 L-40.8,70.7 L-44.4,68.3 L-47.8,65.9 L-51.3,63.3 L-54.6,60.7 L-57.9,57.9 L-61.2,55.1 L-64.4,52.1 L-67.5,49.1 L-69.5,45.1 L-71.3,41.2 L-73.0,37.2 L-74.6,33.2 L-76.0,29.2 L-77.4,25.2 L-78.7,21.1 L-79.8,17.0 L-80.9,12.8 L-81.9,8.6 L-82.7,4.3 L-83.5,0.0 L-82.7,-4.3 L-81.9,-8.6 L-80.9,-12.8 L-79.8,-17.0 L-78.7,-21.1 L-77.4,-25.2 L-76.0,-29.2 L-74.6,-33.2 L-73.0,-37.2 L-71.3,-41.2 L-69.5,-45.1 L-67.5,-49.1 L-64.4,-52.1 L-61.2,-55.1 L-57.9,-57.9 L-54.6,-60.7 L-51.3,-63.3 L-47.8,-65.9 L-44.4,-68.3 L-40.8,-70.7 L-37.2,-73.0 L-33.5,-75.2 L-29.7,-77.3 L-25.8,-79.4 L-21.4,-80.0 L-17.1,-80.5 L-12.8,-80.9 L-8.5,-81.2 L-4.3,-81.3Z" fill="none" stroke="#d9a7ab" stroke-width="2.2" stroke-dasharray="2 1.7" stroke-opacity=".92" filter="url(#kb0)"/><path d="M0.0,-149.0 L7.8,-148.9 L15.6,-148.6 L23.5,-148.1 L31.3,-147.4 L39.2,-146.5 L47.2,-145.4 L54.3,-141.6 L61.3,-137.6 L68.1,-133.6 L74.7,-129.4 L81.2,-125.0 L87.6,-120.5 L93.8,-115.9 L100.0,-111.0 L106.0,-106.0 L112.0,-100.8 L117.8,-95.4 L123.6,-89.8 L127.2,-82.6 L130.5,-75.3 L133.6,-68.1 L136.5,-60.8 L139.2,-53.4 L141.7,-46.0 L144.0,-38.6 L146.1,-31.1 L148.1,-23.5 L149.8,-15.7 L151.4,-7.9 L152.8,-0.0 L151.4,7.9 L149.8,15.7 L148.1,23.5 L146.1,31.1 L144.0,38.6 L141.7,46.0 L139.2,53.4 L136.5,60.8 L133.6,68.1 L130.5,75.3 L127.2,82.6 L123.6,89.8 L117.8,95.4 L112.0,100.8 L106.0,106.0 L100.0,111.0 L93.8,115.9 L87.6,120.5 L81.2,125.0 L74.7,129.4 L68.1,133.6 L61.3,137.6 L54.3,141.6 L47.2,145.4 L39.2,146.5 L31.3,147.4 L23.5,148.1 L15.6,148.6 L7.8,148.9 L0.0,149.0 L-7.8,148.9 L-15.6,148.6 L-23.5,148.1 L-31.3,147.4 L-39.2,146.5 L-47.2,145.4 L-54.3,141.6 L-61.3,137.6 L-68.1,133.6 L-74.7,129.4 L-81.2,125.0 L-87.6,120.5 L-93.8,115.9 L-100.0,111.0 L-106.0,106.0 L-112.0,100.8 L-117.8,95.4 L-123.6,89.8 L-127.2,82.6 L-130.5,75.3 L-133.6,68.1 L-136.5,60.8 L-139.2,53.4 L-141.7,46.0 L-144.0,38.6 L-146.1,31.1 L-148.1,23.5 L-149.8,15.7 L-151.4,7.9 L-152.8,0.0 L-151.4,-7.9 L-149.8,-15.7 L-148.1,-23.5 L-146.1,-31.1 L-144.0,-38.6 L-141.7,-46.0 L-139.2,-53.4 L-136.5,-60.8 L-133.6,-68.1 L-130.5,-75.3 L-127.2,-82.6 L-123.6,-89.8 L-117.8,-95.4 L-112.0,-100.8 L-106.0,-106.0 L-100.0,-111.0 L-93.8,-115.9 L-87.6,-120.5 L-81.2,-125.0 L-74.7,-129.4 L-68.1,-133.6 L-61.3,-137.6 L-54.3,-141.6 L-47.2,-145.4 L-39.2,-146.5 L-31.3,-147.4 L-23.5,-148.1 L-15.6,-148.6 L-7.8,-148.9Z" fill="none" stroke="#b23621" stroke-width="16" stroke-opacity=".6" filter="url(#kb2)"/><path d="M0.0,-149.0 L7.8,-148.9 L15.6,-148.6 L23.5,-148.1 L31.3,-147.4 L39.2,-146.5 L47.2,-145.4 L54.3,-141.6 L61.3,-137.6 L68.1,-133.6 L74.7,-129.4 L81.2,-125.0 L87.6,-120.5 L93.8,-115.9 L100.0,-111.0 L106.0,-106.0 L112.0,-100.8 L117.8,-95.4 L123.6,-89.8 L127.2,-82.6 L130.5,-75.3 L133.6,-68.1 L136.5,-60.8 L139.2,-53.4 L141.7,-46.0 L144.0,-38.6 L146.1,-31.1 L148.1,-23.5 L149.8,-15.7 L151.4,-7.9 L152.8,-0.0 L151.4,7.9 L149.8,15.7 L148.1,23.5 L146.1,31.1 L144.0,38.6 L141.7,46.0 L139.2,53.4 L136.5,60.8 L133.6,68.1 L130.5,75.3 L127.2,82.6 L123.6,89.8 L117.8,95.4 L112.0,100.8 L106.0,106.0 L100.0,111.0 L93.8,115.9 L87.6,120.5 L81.2,125.0 L74.7,129.4 L68.1,133.6 L61.3,137.6 L54.3,141.6 L47.2,145.4 L39.2,146.5 L31.3,147.4 L23.5,148.1 L15.6,148.6 L7.8,148.9 L0.0,149.0 L-7.8,148.9 L-15.6,148.6 L-23.5,148.1 L-31.3,147.4 L-39.2,146.5 L-47.2,145.4 L-54.3,141.6 L-61.3,137.6 L-68.1,133.6 L-74.7,129.4 L-81.2,125.0 L-87.6,120.5 L-93.8,115.9 L-100.0,111.0 L-106.0,106.0 L-112.0,100.8 L-117.8,95.4 L-123.6,89.8 L-127.2,82.6 L-130.5,75.3 L-133.6,68.1 L-136.5,60.8 L-139.2,53.4 L-141.7,46.0 L-144.0,38.6 L-146.1,31.1 L-148.1,23.5 L-149.8,15.7 L-151.4,7.9 L-152.8,0.0 L-151.4,-7.9 L-149.8,-15.7 L-148.1,-23.5 L-146.1,-31.1 L-144.0,-38.6 L-141.7,-46.0 L-139.2,-53.4 L-136.5,-60.8 L-133.6,-68.1 L-130.5,-75.3 L-127.2,-82.6 L-123.6,-89.8 L-117.8,-95.4 L-112.0,-100.8 L-106.0,-106.0 L-100.0,-111.0 L-93.8,-115.9 L-87.6,-120.5 L-81.2,-125.0 L-74.7,-129.4 L-68.1,-133.6 L-61.3,-137.6 L-54.3,-141.6 L-47.2,-145.4 L-39.2,-146.5 L-31.3,-147.4 L-23.5,-148.1 L-15.6,-148.6 L-7.8,-148.9Z" fill="none" stroke="#cf9294" stroke-width="7.5" stroke-opacity=".35" filter="url(#kb1)"/><path d="M0.0,-151.6 L7.9,-151.5 L15.9,-151.2 L23.9,-150.7 L31.9,-149.9 L39.9,-149.0 L48.1,-147.9 L55.3,-144.0 L62.4,-140.0 L69.3,-135.9 L76.0,-131.7 L82.6,-127.2 L89.1,-122.6 L95.5,-117.9 L101.7,-113.0 L107.9,-107.9 L113.9,-102.6 L119.9,-97.1 L125.8,-91.4 L129.4,-84.0 L132.8,-76.6 L135.9,-69.3 L138.9,-61.8 L141.6,-54.4 L144.2,-46.8 L146.5,-39.3 L148.7,-31.6 L150.7,-23.9 L152.5,-16.0 L154.1,-8.1 L155.5,-0.0 L154.1,8.1 L152.5,16.0 L150.7,23.9 L148.7,31.6 L146.5,39.3 L144.2,46.8 L141.6,54.4 L138.9,61.8 L135.9,69.3 L132.8,76.6 L129.4,84.0 L125.8,91.4 L119.9,97.1 L113.9,102.6 L107.9,107.9 L101.7,113.0 L95.5,117.9 L89.1,122.6 L82.6,127.2 L76.0,131.7 L69.3,135.9 L62.4,140.0 L55.3,144.0 L48.1,147.9 L39.9,149.0 L31.9,149.9 L23.9,150.7 L15.9,151.2 L7.9,151.5 L0.0,151.6 L-7.9,151.5 L-15.9,151.2 L-23.9,150.7 L-31.9,149.9 L-39.9,149.0 L-48.1,147.9 L-55.3,144.0 L-62.4,140.0 L-69.3,135.9 L-76.0,131.7 L-82.6,127.2 L-89.1,122.6 L-95.5,117.9 L-101.7,113.0 L-107.9,107.9 L-113.9,102.6 L-119.9,97.1 L-125.8,91.4 L-129.4,84.0 L-132.8,76.6 L-135.9,69.3 L-138.9,61.8 L-141.6,54.4 L-144.2,46.8 L-146.5,39.3 L-148.7,31.6 L-150.7,23.9 L-152.5,16.0 L-154.1,8.1 L-155.5,0.0 L-154.1,-8.1 L-152.5,-16.0 L-150.7,-23.9 L-148.7,-31.6 L-146.5,-39.3 L-144.2,-46.8 L-141.6,-54.4 L-138.9,-61.8 L-135.9,-69.3 L-132.8,-76.6 L-129.4,-84.0 L-125.8,-91.4 L-119.9,-97.1 L-113.9,-102.6 L-107.9,-107.9 L-101.7,-113.0 L-95.5,-117.9 L-89.1,-122.6 L-82.6,-127.2 L-76.0,-131.7 L-69.3,-135.9 L-62.4,-140.0 L-55.3,-144.0 L-48.1,-147.9 L-39.9,-149.0 L-31.9,-149.9 L-23.9,-150.7 L-15.9,-151.2 L-7.9,-151.5Z" fill="none" stroke="#d9a7ab" stroke-width="2.2" stroke-dasharray="2 1.7" stroke-opacity=".92" filter="url(#kb0)"/><path d="M0.0,-146.4 L7.7,-146.3 L15.3,-146.0 L23.0,-145.5 L30.8,-144.8 L38.6,-143.9 L46.4,-142.8 L53.4,-139.1 L60.2,-135.2 L66.9,-131.3 L73.4,-127.1 L79.8,-122.9 L86.1,-118.4 L92.2,-113.9 L98.2,-109.1 L104.2,-104.2 L110.0,-99.1 L115.8,-93.8 L121.5,-88.3 L124.9,-81.1 L128.2,-74.0 L131.3,-66.9 L134.1,-59.7 L136.8,-52.5 L139.2,-45.2 L141.5,-37.9 L143.6,-30.5 L145.5,-23.0 L147.2,-15.5 L148.8,-7.8 L150.2,-0.0 L148.8,7.8 L147.2,15.5 L145.5,23.0 L143.6,30.5 L141.5,37.9 L139.2,45.2 L136.8,52.5 L134.1,59.7 L131.3,66.9 L128.2,74.0 L124.9,81.1 L121.5,88.3 L115.8,93.8 L110.0,99.1 L104.2,104.2 L98.2,109.1 L92.2,113.9 L86.1,118.4 L79.8,122.9 L73.4,127.1 L66.9,131.3 L60.2,135.2 L53.4,139.1 L46.4,142.8 L38.6,143.9 L30.8,144.8 L23.0,145.5 L15.3,146.0 L7.7,146.3 L0.0,146.4 L-7.7,146.3 L-15.3,146.0 L-23.0,145.5 L-30.8,144.8 L-38.6,143.9 L-46.4,142.8 L-53.4,139.1 L-60.2,135.2 L-66.9,131.3 L-73.4,127.1 L-79.8,122.9 L-86.1,118.4 L-92.2,113.9 L-98.2,109.1 L-104.2,104.2 L-110.0,99.1 L-115.8,93.8 L-121.5,88.3 L-124.9,81.1 L-128.2,74.0 L-131.3,66.9 L-134.1,59.7 L-136.8,52.5 L-139.2,45.2 L-141.5,37.9 L-143.6,30.5 L-145.5,23.0 L-147.2,15.5 L-148.8,7.8 L-150.2,0.0 L-148.8,-7.8 L-147.2,-15.5 L-145.5,-23.0 L-143.6,-30.5 L-141.5,-37.9 L-139.2,-45.2 L-136.8,-52.5 L-134.1,-59.7 L-131.3,-66.9 L-128.2,-74.0 L-124.9,-81.1 L-121.5,-88.3 L-115.8,-93.8 L-110.0,-99.1 L-104.2,-104.2 L-98.2,-109.1 L-92.2,-113.9 L-86.1,-118.4 L-79.8,-122.9 L-73.4,-127.1 L-66.9,-131.3 L-60.2,-135.2 L-53.4,-139.1 L-46.4,-142.8 L-38.6,-143.9 L-30.8,-144.8 L-23.0,-145.5 L-15.3,-146.0 L-7.7,-146.3Z" fill="none" stroke="#d9a7ab" stroke-width="2.2" stroke-dasharray="2 1.7" stroke-opacity=".92" filter="url(#kb0)"/></g>
<g fill="#a52a1a" fill-opacity=".75"><use href="#kmark" transform="rotate(0)"/><use href="#kmark" transform="rotate(36)"/><use href="#kmark" transform="rotate(72)"/><use href="#kmark" transform="rotate(108)"/><use href="#kmark" transform="rotate(144)"/><use href="#kmark" transform="rotate(180)"/><use href="#kmark" transform="rotate(216)"/><use href="#kmark" transform="rotate(252)"/><use href="#kmark" transform="rotate(288)"/><use href="#kmark" transform="rotate(324)"/></g>
<path d="M-30,-28 L24,30 M22,-22 L-20,26" stroke="#6b4a2c" stroke-opacity=".3" stroke-width="1" fill="none"/>
<rect x="-116" y="-116" width="232" height="232" filter="url(#ktex)" opacity=".65"/>
</svg>
<div style="left:421px;top:272px;width:299px;height:56px;background:#ece9d8"></div>
<div class="x " style="top:277px;left:420.5px;width:300px;text-align:center;transform-origin:50% 50%;">Japanese Paper</div>
<div style="left:421px;top:296px;width:299px;height:11px;border:1px solid #5a5a5a;border-radius:3px;background:#fff;box-shadow:inset 0 1px 0 #d8d8d8"></div>
<div class="sep" style="top:344px"></div><div class="sep" style="top:362px"></div><div class="sep" style="top:380px"></div><div class="sep" style="top:398px"></div><div class="sep" style="top:416px"></div><div class="sep" style="top:434px"></div><div class="sep" style="top:452px"></div>
<div class="x " style="top:329px;left:424px;transform-origin:0 50%;">Intensity</div>
<div class="x " style="top:347px;left:424px;transform-origin:0 50%;">Lightness</div>
<div class="x " style="top:329px;right:17px;transform-origin:100% 50%;">84</div>
<div class="x " style="top:347px;right:17px;transform-origin:100% 50%;">87</div>
<svg style="position:absolute;left:421px;top:328px" width="299" height="40" viewBox="0 0 299 40">
<path d="M89.5,16.5 L98,7 L106.5,16.5 Z M93.5,34.5 L102,25 L110.5,34.5 Z" fill="#ece9d8"/>
<g stroke="#eeede6" stroke-width="1"><path d="M75.5,0v4M150.5,0v4M225.5,0v4M75.5,18v4M150.5,18v4M225.5,18v4"/></g>
</svg>

<!-- status -->
<div class="x " style="top:514px;left:7px;transform-origin:0 50%;">Database:</div>
<div class="x " style="top:514px;left:64px;transform-origin:0 50%;">ICNET-Filters</div>
<div class="x " style="top:527px;left:7px;transform-origin:0 50%;">Filters:</div>
<div class="x " style="top:527px;left:64px;transform-origin:0 50%;">1086</div>

<!-- buttons -->
<div class="btn" style="left:506px;top:515px;box-shadow:inset 0 0 0 2px #a9c0f0,inset 0 -1px 0 2px #7f9ee0"></div>
<div class="btn" style="left:582px;top:515px"></div>
<div class="btn" style="left:659px;top:515px"></div>
<div class="x " style="top:520px;left:389.5px;width:300px;text-align:center;transform-origin:50% 50%;">Apply</div>
<div class="x " style="top:520px;left:466px;width:300px;text-align:center;transform-origin:50% 50%;">Cancel</div>
<div class="x " style="top:520px;left:542.5px;width:300px;text-align:center;transform-origin:50% 50%;">Help</div>

<svg style="position:absolute;left:0;top:0;pointer-events:none" width="734" height="546" viewBox="0 0 734 546">
<defs><path id="wmp1" d="M555,440 C574,445 595,460 611,477"/><path id="wmp2" d="M493,463 C515,482 550,500 590,507"/></defs>
<g transform="translate(-0.4 -0.4)" opacity="0.9" stroke="#ffffff" fill="none" stroke-linecap="round">
<g stroke-width="2.4"><ellipse cx="539.5" cy="470" rx="57" ry="23" transform="rotate(27 539.5 470)"/><ellipse cx="541" cy="460" rx="18" ry="7.5" transform="rotate(22 541 460)"/>
<path d="M502,399 C540,405 600,440 622,470 C640,497 622,513 596,510 C575,507 545,497 520,480"/></g>
<path d="M493.8,394.8L498.4,395.6 M492.6,396.2L494.2,400.6 M490.8,395.9L487.8,399.5 M490.2,394.2L485.6,393.4 M491.4,392.8L489.8,388.4 M493.2,393.1L496.2,389.5 M528.1,398.1L532.1,399.6 M526.8,399.2L527.5,403.4 M525.2,398.6L521.9,401.4 M524.9,396.9L520.9,395.4 M526.2,395.8L525.5,391.6 M527.8,396.4L531.1,393.6 M521.8,417.7L526.5,418.1 M520.8,419.1L522.7,423.4 M519.0,419.0L516.3,422.8 M518.2,417.3L513.5,416.9 M519.2,415.9L517.3,411.6 M521.0,416.0L523.7,412.2 M505.6,381.0L508.5,381.0 M505.1,382.0L506.5,384.5 M503.9,382.0L502.5,384.5 M503.4,381.0L500.5,381.0 M503.9,380.0L502.5,377.5 M505.1,380.0L506.5,377.5 M642.6,495.6L645.5,496.1 M641.8,496.5L642.8,499.3 M640.6,496.3L638.7,498.6 M640.2,495.2L637.3,494.7 M641.0,494.3L640.0,491.5 M642.2,494.5L644.1,492.2 M636.2,510.4L639.2,510.4 M635.6,511.4L637.1,514.0 M634.4,511.4L632.9,514.0 M633.8,510.4L630.8,510.4 M634.4,509.4L632.9,506.8 M635.6,509.4L637.1,506.8" stroke-width="2.6"/><path d="M481.8,383.2L483.9,383.8 M481.2,383.8L481.8,385.9 M480.4,383.6L478.9,385.1 M480.2,382.8L478.1,382.2 M480.8,382.2L480.2,380.1 M481.6,382.4L483.1,380.9 M520.8,387.1L523.0,387.5 M520.3,387.8L521.0,389.8 M519.5,387.6L518.1,389.3 M519.2,386.9L517.0,386.5 M519.7,386.2L519.0,384.2 M520.5,386.4L521.9,384.7 M488.5,409.0L491.0,409.0 M488.0,409.8L489.2,412.0 M487.0,409.8L485.8,412.0 M486.5,409.0L484.0,409.0 M487.0,408.2L485.8,406.0 M488.0,408.2L489.2,406.0 M604.3,500.2L606.0,500.9 M603.7,500.7L604.1,502.6 M603.0,500.5L601.6,501.7 M602.9,499.8L601.2,499.1 M603.5,499.3L603.1,497.4 M604.2,499.5L605.6,498.3 M539.3,458.6L541.5,459.0 M538.8,459.3L539.5,461.3 M538.0,459.1L536.6,460.8 M537.7,458.4L535.5,458.0 M538.2,457.7L537.5,455.7 M539.0,457.9L540.4,456.2 M557.6,452.0L559.2,452.0 M557.3,452.5L558.1,453.9 M556.7,452.5L555.9,453.9 M556.4,452.0L554.8,452.0 M556.7,451.5L555.9,450.1 M557.3,451.5L558.1,450.1 M571.6,479.0L573.2,479.0 M571.3,479.5L572.1,480.9 M570.7,479.5L569.9,480.9 M570.4,479.0L568.8,479.0 M570.7,478.5L569.9,477.1 M571.3,478.5L572.1,477.1" stroke-width="1.56"/>
<g fill="#ffffff" stroke-width="0.8"><circle cx="490" cy="380.5" r="1.1"/><circle cx="502.5" cy="392" r="1.1"/><circle cx="478.5" cy="395.5" r="1.1"/><circle cx="504.5" cy="407" r="1.1"/><circle cx="514" cy="407" r="1.1"/><circle cx="495" cy="416.5" r="1.1"/><circle cx="548" cy="460" r="1.1"/><circle cx="553" cy="463" r="1.1"/><circle cx="561" cy="468" r="1.1"/><circle cx="565" cy="474" r="1.1"/><circle cx="560" cy="478" r="1.1"/><circle cx="641.4" cy="485.2" r="1.1"/><circle cx="647.7" cy="486" r="1.1"/><circle cx="652.4" cy="493.9" r="1.1"/><circle cx="650.9" cy="503.3" r="1.1"/><circle cx="628.8" cy="507.2" r="1.1"/><circle cx="644.6" cy="515.1" r="1.1"/><circle cx="618.6" cy="514.3" r="1.1"/><circle cx="611.5" cy="515.1" r="1.1"/><circle cx="600.5" cy="518.3" r="1.1"/><circle cx="595.7" cy="523" r="1.1"/><circle cx="604.4" cy="493.9" r="1.1"/><circle cx="613" cy="493" r="1.1"/><circle cx="624" cy="519" r="1.1"/><circle cx="631" cy="522" r="1.1"/><path d="M510,391 a4,4 0 1 0 5,5 a3.2,3.2 0 0 1 -5,-5Z M496.5,402 a4,4 0 1 0 5,5 a3.2,3.2 0 0 1 -5,-5Z"/>
<text font-family="Liberation Serif, serif" font-style="italic" font-weight="bold" font-size="17" letter-spacing="0.6" fill-opacity="1"><textPath href="#wmp1">Pinuccia</textPath></text>
<text font-family="Liberation Serif, serif" font-style="italic" font-weight="bold" font-size="10.5" letter-spacing="0.2"><textPath href="#wmp2">www.maidiregrafica.eu</textPath></text>
</g></g>
<g transform="translate(0.7 0.7)" opacity="0.55" stroke="#a8a8a8" fill="none" stroke-linecap="round">
<g stroke-width="0.9"><ellipse cx="539.5" cy="470" rx="57" ry="23" transform="rotate(27 539.5 470)"/><ellipse cx="541" cy="460" rx="18" ry="7.5" transform="rotate(22 541 460)"/>
<path d="M502,399 C540,405 600,440 622,470 C640,497 622,513 596,510 C575,507 545,497 520,480"/></g>
<path d="M493.8,394.8L498.4,395.6 M492.6,396.2L494.2,400.6 M490.8,395.9L487.8,399.5 M490.2,394.2L485.6,393.4 M491.4,392.8L489.8,388.4 M493.2,393.1L496.2,389.5 M528.1,398.1L532.1,399.6 M526.8,399.2L527.5,403.4 M525.2,398.6L521.9,401.4 M524.9,396.9L520.9,395.4 M526.2,395.8L525.5,391.6 M527.8,396.4L531.1,393.6 M521.8,417.7L526.5,418.1 M520.8,419.1L522.7,423.4 M519.0,419.0L516.3,422.8 M518.2,417.3L513.5,416.9 M519.2,415.9L517.3,411.6 M521.0,416.0L523.7,412.2 M505.6,381.0L508.5,381.0 M505.1,382.0L506.5,384.5 M503.9,382.0L502.5,384.5 M503.4,381.0L500.5,381.0 M503.9,380.0L502.5,377.5 M505.1,380.0L506.5,377.5 M642.6,495.6L645.5,496.1 M641.8,496.5L642.8,499.3 M640.6,496.3L638.7,498.6 M640.2,495.2L637.3,494.7 M641.0,494.3L640.0,491.5 M642.2,494.5L644.1,492.2 M636.2,510.4L639.2,510.4 M635.6,511.4L637.1,514.0 M634.4,511.4L632.9,514.0 M633.8,510.4L630.8,510.4 M634.4,509.4L632.9,506.8 M635.6,509.4L637.1,506.8" stroke-width="1.9"/><path d="M481.8,383.2L483.9,383.8 M481.2,383.8L481.8,385.9 M480.4,383.6L478.9,385.1 M480.2,382.8L478.1,382.2 M480.8,382.2L480.2,380.1 M481.6,382.4L483.1,380.9 M520.8,387.1L523.0,387.5 M520.3,387.8L521.0,389.8 M519.5,387.6L518.1,389.3 M519.2,386.9L517.0,386.5 M519.7,386.2L519.0,384.2 M520.5,386.4L521.9,384.7 M488.5,409.0L491.0,409.0 M488.0,409.8L489.2,412.0 M487.0,409.8L485.8,412.0 M486.5,409.0L484.0,409.0 M487.0,408.2L485.8,406.0 M488.0,408.2L489.2,406.0 M604.3,500.2L606.0,500.9 M603.7,500.7L604.1,502.6 M603.0,500.5L601.6,501.7 M602.9,499.8L601.2,499.1 M603.5,499.3L603.1,497.4 M604.2,499.5L605.6,498.3 M539.3,458.6L541.5,459.0 M538.8,459.3L539.5,461.3 M538.0,459.1L536.6,460.8 M537.7,458.4L535.5,458.0 M538.2,457.7L537.5,455.7 M539.0,457.9L540.4,456.2 M557.6,452.0L559.2,452.0 M557.3,452.5L558.1,453.9 M556.7,452.5L555.9,453.9 M556.4,452.0L554.8,452.0 M556.7,451.5L555.9,450.1 M557.3,451.5L558.1,450.1 M571.6,479.0L573.2,479.0 M571.3,479.5L572.1,480.9 M570.7,479.5L569.9,480.9 M570.4,479.0L568.8,479.0 M570.7,478.5L569.9,477.1 M571.3,478.5L572.1,477.1" stroke-width="1.14"/>
<g fill="#a8a8a8" stroke-width="0"><circle cx="490" cy="380.5" r="1.1"/><circle cx="502.5" cy="392" r="1.1"/><circle cx="478.5" cy="395.5" r="1.1"/><circle cx="504.5" cy="407" r="1.1"/><circle cx="514" cy="407" r="1.1"/><circle cx="495" cy="416.5" r="1.1"/><circle cx="548" cy="460" r="1.1"/><circle cx="553" cy="463" r="1.1"/><circle cx="561" cy="468" r="1.1"/><circle cx="565" cy="474" r="1.1"/><circle cx="560" cy="478" r="1.1"/><circle cx="641.4" cy="485.2" r="1.1"/><circle cx="647.7" cy="486" r="1.1"/><circle cx="652.4" cy="493.9" r="1.1"/><circle cx="650.9" cy="503.3" r="1.1"/><circle cx="628.8" cy="507.2" r="1.1"/><circle cx="644.6" cy="515.1" r="1.1"/><circle cx="618.6" cy="514.3" r="1.1"/><circle cx="611.5" cy="515.1" r="1.1"/><circle cx="600.5" cy="518.3" r="1.1"/><circle cx="595.7" cy="523" r="1.1"/><circle cx="604.4" cy="493.9" r="1.1"/><circle cx="613" cy="493" r="1.1"/><circle cx="624" cy="519" r="1.1"/><circle cx="631" cy="522" r="1.1"/><path d="M510,391 a4,4 0 1 0 5,5 a3.2,3.2 0 0 1 -5,-5Z M496.5,402 a4,4 0 1 0 5,5 a3.2,3.2 0 0 1 -5,-5Z"/>
<text font-family="Liberation Serif, serif" font-style="italic" font-weight="bold" font-size="17" letter-spacing="0.6" fill-opacity="0.7"><textPath href="#wmp1">Pinuccia</textPath></text>
<text font-family="Liberation Serif, serif" font-style="italic" font-weight="bold" font-size="10.5" letter-spacing="0.2"><textPath href="#wmp2">www.maidiregrafica.eu</textPath></text>
</g></g>
</svg>
</body></html>
